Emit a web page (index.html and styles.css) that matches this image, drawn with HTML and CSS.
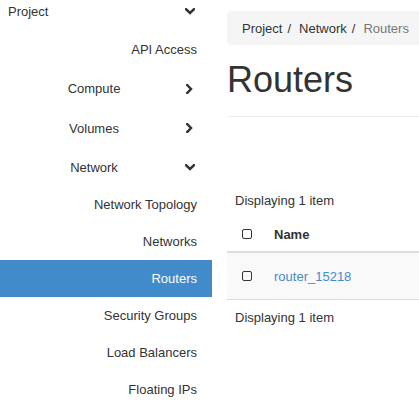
FILE: index.html
```html
<!DOCTYPE html>
<html>
<head>
<meta charset="utf-8">
<link rel="stylesheet" href="styles.css">
</head>
<body>
<div class="layout">
  <nav class="sidebar">
    <div class="item project"><span class="label">Project</span><svg class="chev-down" viewBox="0 0 10 7" width="10" height="7"><path d="M1 1.2 L5 5 L9 1.2" fill="none" stroke="#333" stroke-width="2.5" stroke-linecap="square"/></svg></div>
    <div class="item sub h39">API Access</div>
    <div class="item cat h39"><span class="label">Compute</span><svg class="chev-right" viewBox="0 0 7 10" width="7" height="10"><path d="M1.2 1 L5 5 L1.2 9" fill="none" stroke="#333" stroke-width="2.5" stroke-linecap="square"/></svg></div>
    <div class="item cat h40"><span class="label">Volumes</span><svg class="chev-right" viewBox="0 0 7 10" width="7" height="10"><path d="M1.2 1 L5 5 L1.2 9" fill="none" stroke="#333" stroke-width="2.5" stroke-linecap="square"/></svg></div>
    <div class="item cat h38"><span class="label">Network</span><svg class="chev-down" viewBox="0 0 10 7" width="10" height="7"><path d="M1 1.2 L5 5 L9 1.2" fill="none" stroke="#333" stroke-width="2.5" stroke-linecap="square"/></svg></div>
    <div class="item sub">Network Topology</div>
    <div class="item sub">Networks</div>
    <div class="item sub active">Routers</div>
    <div class="item sub">Security Groups</div>
    <div class="item sub">Load Balancers</div>
    <div class="item sub">Floating IPs</div>
  </nav>
  <main class="content">
    <ol class="breadcrumb">
      <li>Project</li>
      <li>Network</li>
      <li class="current">Routers</li>
    </ol>
    <div class="page-header"><h1>Routers</h1></div>
    <div class="count top">Displaying 1 item</div>
    <table class="table">
      <thead>
        <tr><th class="cb"><span class="box"></span></th><th>Name</th></tr>
      </thead>
      <tbody>
        <tr><td class="cb"><span class="box"></span></td><td><a class="link">router_15218</a></td></tr>
      </tbody>
    </table>
    <div class="count bottom">Displaying 1 item</div>
  </main>
</div>
</body>
</html>
```
FILE: styles.css
```css
html, body {
  margin: 0;
  padding: 0;
  background: #fff;
  font-family: "Liberation Sans", Arial, sans-serif;
  font-size: 13px;
  color: #333;
  overflow: hidden;
}
.layout {
  display: flex;
  align-items: flex-start;
}
.sidebar {
  width: 212px;
  flex: 0 0 212px;
  margin-top: -8px;
}
.item {
  display: flex;
  align-items: center;
  height: 37px;
  box-sizing: border-box;
  color: #333;
}
.item.h38 { height: 38px; }
.item.h39 { height: 39px; }
.item.h40 { height: 40px; }
.project {
  height: 38px;
  padding-left: 8px;
  padding-right: 17px;
  justify-content: space-between;
}
.sub {
  justify-content: flex-end;
  padding-right: 15px;
}
.sub.active {
  background: #428bca;
  color: #fff;
}
.cat .label {
  width: 188px;
  text-align: center;
}
.cat .chev-right {
  margin-left: -2px;
}
.cat .chev-down {
  margin-left: -3px;
}
.content {
  flex: 1;
  min-width: 0;
  padding-left: 15px;
  white-space: nowrap;
}
.breadcrumb {
  list-style: none;
  margin: 11px 0 0;
  padding: 0 15px;
  height: 34px;
  display: flex;
  align-items: center;
  background: #f5f5f5;
  border-radius: 4px 0 0 4px;
}
.breadcrumb li { color: #333; }
.breadcrumb li + li:before {
  content: "/";
  padding: 0 8px 0 5px;
  color: #333;
}
.breadcrumb li.current { color: #777; }
.page-header {
  border-bottom: 1px solid #eee;
  height: 72px;
  box-sizing: border-box;
}
.page-header h1 {
  margin: 0;
  padding-top: 15px;
  font-size: 36px;
  font-weight: 400;
  line-height: 40px;
  color: #333;
}
.count {
  padding-left: 8px;
  line-height: 18px;
}
.count.top { margin-top: 75px; }
.count.bottom { margin-top: 9px; }
.table {
  width: 100%;
  border-collapse: collapse;
  margin-top: 7px;
}
.table th {
  text-align: left;
  font-weight: 700;
  height: 34px;
  padding: 0 8px;
  border-bottom: 2px solid #ddd;
  vertical-align: middle;
}
.table td {
  height: 46px;
  padding: 0 8px;
  background: #f9f9f9;
  border-bottom: 1px solid #ddd;
  vertical-align: middle;
}
.table .cb {
  width: 24px;
  padding-left: 15px;
  padding-right: 0;
}
.box {
  display: block;
  width: 8px;
  height: 8px;
  border: 1.5px solid #333;
  border-radius: 2px;
}
.link {
  color: #428bca;
  text-decoration: none;
}
```
